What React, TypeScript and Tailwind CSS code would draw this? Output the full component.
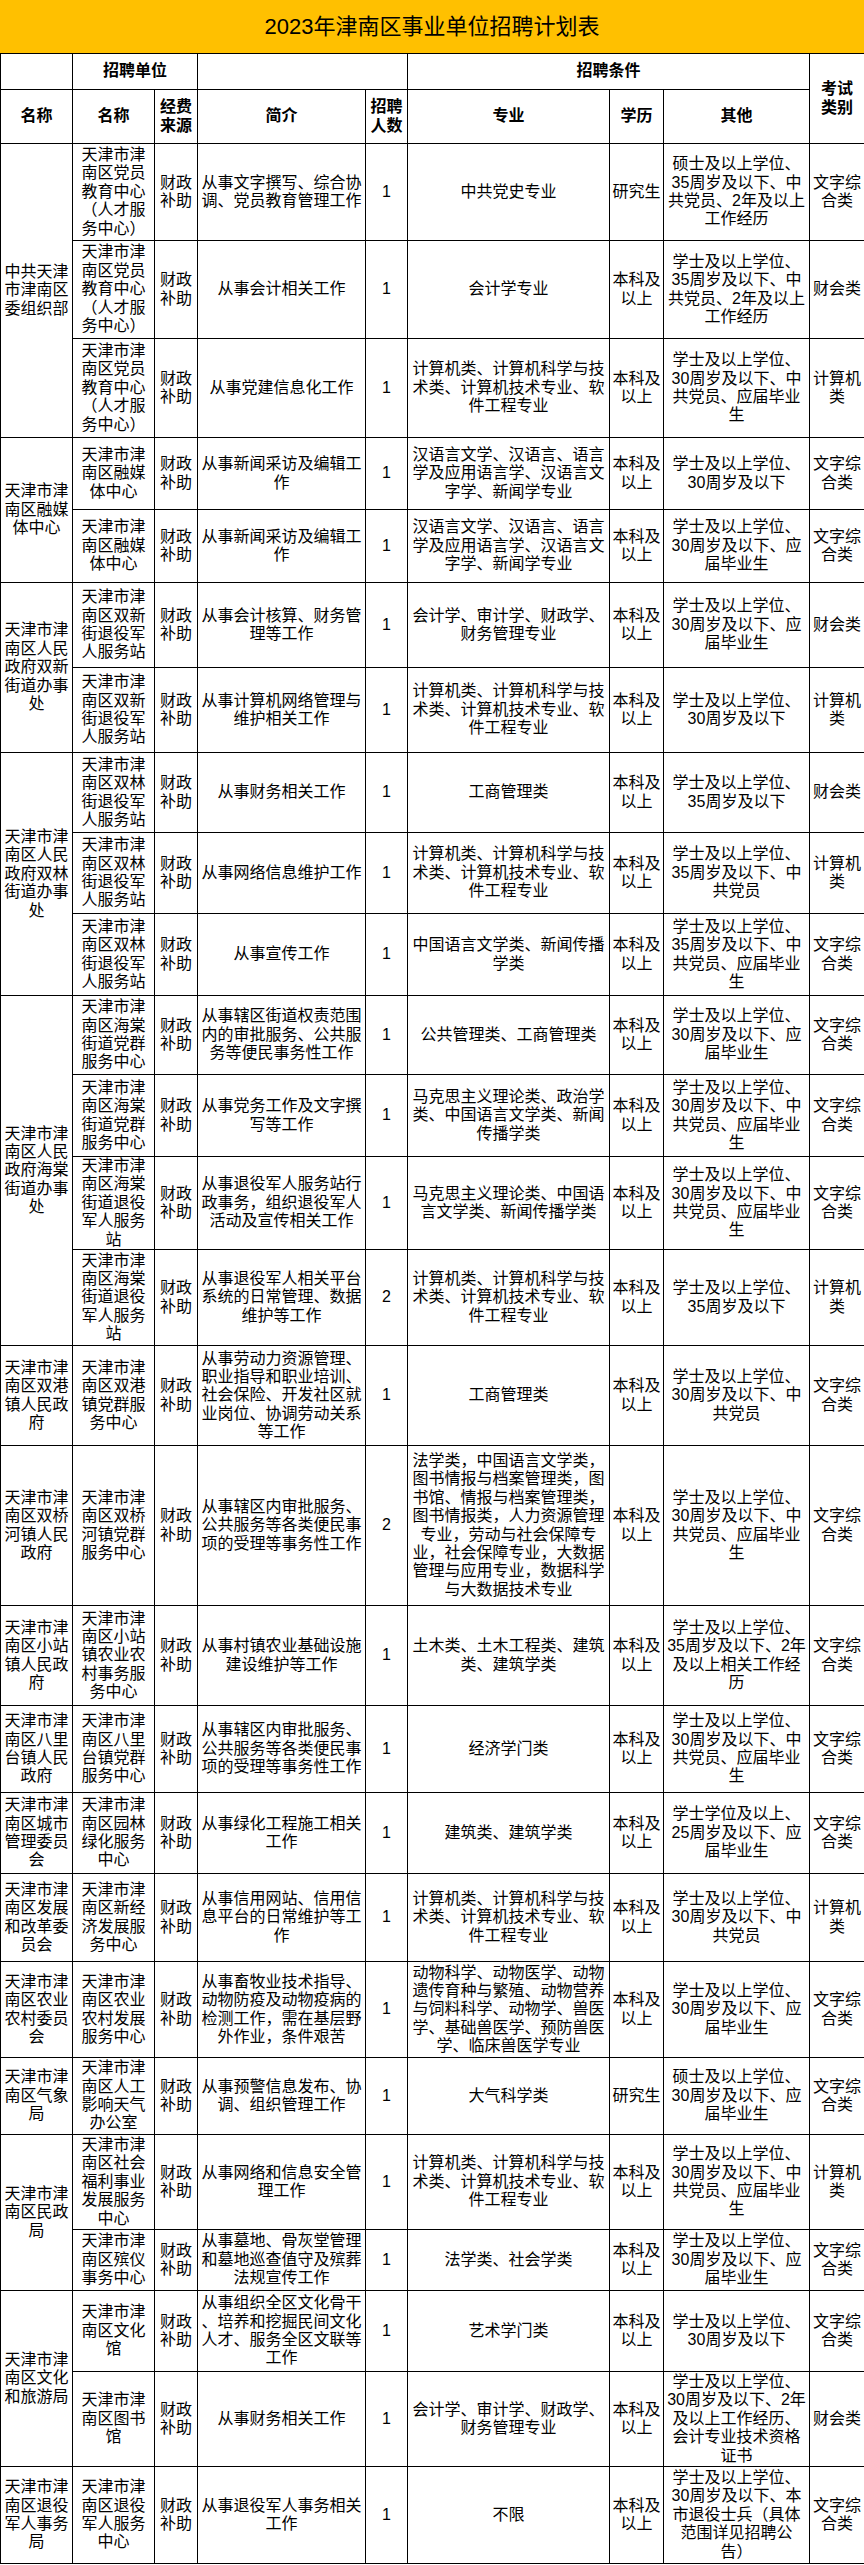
import React from 'react';

type Row = {
  h: string;
  org?: string;
  span?: number;
  unit: string;
  intro: string;
  num: string;
  major: string;
  edu: string;
  other: string;
  exam: string;
};

const DY = '天津市津\n南区党员\n教育中心\n（人才服\n务中心）';
const JSJ = '计算机类、计算机科学与技\n术类、计算机技术专业、软\n件工程专业';
const HYY = '汉语言文学、汉语言、语言\n学及应用语言学、汉语言文\n字学、新闻学专业';
const BK = '本科及\n以上';
const WZ = '文字综\n合类';
const JS = '计算机\n类';
const CK = '财会类';

const rows: Row[] = [
  { h: 'h-[97px]', org: '中共天津\n市津南区\n委组织部', span: 3, unit: DY, intro: '从事文字撰写、综合协\n调、党员教育管理工作', num: '1', major: '中共党史专业', edu: '研究生', other: '硕士及以上学位、\n35周岁及以下、中\n共党员、2年及以上\n工作经历', exam: WZ },
  { h: 'h-[98px]', unit: DY, intro: '从事会计相关工作', num: '1', major: '会计学专业', edu: BK, other: '学士及以上学位、\n35周岁及以下、中\n共党员、2年及以上\n工作经历', exam: CK },
  { h: 'h-[99px]', unit: DY, intro: '从事党建信息化工作', num: '1', major: JSJ, edu: BK, other: '学士及以上学位、\n30周岁及以下、中\n共党员、应届毕业\n生', exam: JS },
  { h: 'h-[72px]', org: '天津市津\n南区融媒\n体中心', span: 2, unit: '天津市津\n南区融媒\n体中心', intro: '从事新闻采访及编辑工\n作', num: '1', major: HYY, edu: BK, other: '学士及以上学位、\n30周岁及以下', exam: WZ },
  { h: 'h-[73px]', unit: '天津市津\n南区融媒\n体中心', intro: '从事新闻采访及编辑工\n作', num: '1', major: HYY, edu: BK, other: '学士及以上学位、\n30周岁及以下、应\n届毕业生', exam: WZ },
  { h: 'h-[85px]', org: '天津市津\n南区人民\n政府双新\n街道办事\n处', span: 2, unit: '天津市津\n南区双新\n街退役军\n人服务站', intro: '从事会计核算、财务管\n理等工作', num: '1', major: '会计学、审计学、财政学、\n财务管理专业', edu: BK, other: '学士及以上学位、\n30周岁及以下、应\n届毕业生', exam: CK },
  { h: 'h-[85px]', unit: '天津市津\n南区双新\n街退役军\n人服务站', intro: '从事计算机网络管理与\n维护相关工作', num: '1', major: JSJ, edu: BK, other: '学士及以上学位、\n30周岁及以下', exam: JS },
  { h: 'h-[80px]', org: '天津市津\n南区人民\n政府双林\n街道办事\n处', span: 3, unit: '天津市津\n南区双林\n街退役军\n人服务站', intro: '从事财务相关工作', num: '1', major: '工商管理类', edu: BK, other: '学士及以上学位、\n35周岁及以下', exam: CK },
  { h: 'h-[81px]', unit: '天津市津\n南区双林\n街退役军\n人服务站', intro: '从事网络信息维护工作', num: '1', major: JSJ, edu: BK, other: '学士及以上学位、\n35周岁及以下、中\n共党员', exam: JS },
  { h: 'h-[82px]', unit: '天津市津\n南区双林\n街退役军\n人服务站', intro: '从事宣传工作', num: '1', major: '中国语言文学类、新闻传播\n学类', edu: BK, other: '学士及以上学位、\n35周岁及以下、中\n共党员、应届毕业\n生', exam: WZ },
  { h: 'h-[79px]', org: '天津市津\n南区人民\n政府海棠\n街道办事\n处', span: 4, unit: '天津市津\n南区海棠\n街道党群\n服务中心', intro: '从事辖区街道权责范围\n内的审批服务、公共服\n务等便民事务性工作', num: '1', major: '公共管理类、工商管理类', edu: BK, other: '学士及以上学位、\n30周岁及以下、应\n届毕业生', exam: WZ },
  { h: 'h-[82px]', unit: '天津市津\n南区海棠\n街道党群\n服务中心', intro: '从事党务工作及文字撰\n写等工作', num: '1', major: '马克思主义理论类、政治学\n类、中国语言文学类、新闻\n传播学类', edu: BK, other: '学士及以上学位、\n30周岁及以下、中\n共党员、应届毕业\n生', exam: WZ },
  { h: 'h-[93px]', unit: '天津市津\n南区海棠\n街道退役\n军人服务\n站', intro: '从事退役军人服务站行\n政事务，组织退役军人\n活动及宣传相关工作', num: '1', major: '马克思主义理论类、中国语\n言文学类、新闻传播学类', edu: BK, other: '学士及以上学位、\n30周岁及以下、中\n共党员、应届毕业\n生', exam: WZ },
  { h: 'h-[96px]', unit: '天津市津\n南区海棠\n街道退役\n军人服务\n站', intro: '从事退役军人相关平台\n系统的日常管理、数据\n维护等工作', num: '2', major: JSJ, edu: BK, other: '学士及以上学位、\n35周岁及以下', exam: JS },
  { h: 'h-[100px]', org: '天津市津\n南区双港\n镇人民政\n府', span: 1, unit: '天津市津\n南区双港\n镇党群服\n务中心', intro: '从事劳动力资源管理、\n职业指导和职业培训、\n社会保险、开发社区就\n业岗位、协调劳动关系\n等工作', num: '1', major: '工商管理类', edu: BK, other: '学士及以上学位、\n30周岁及以下、中\n共党员', exam: WZ },
  { h: 'h-[160px]', org: '天津市津\n南区双桥\n河镇人民\n政府', span: 1, unit: '天津市津\n南区双桥\n河镇党群\n服务中心', intro: '从事辖区内审批服务、\n公共服务等各类便民事\n项的受理等事务性工作', num: '2', major: '法学类，中国语言文学类，\n图书情报与档案管理类，图\n书馆、情报与档案管理类，\n图书情报类，人力资源管理\n专业，劳动与社会保障专\n业，社会保障专业，大数据\n管理与应用专业，数据科学\n与大数据技术专业', edu: BK, other: '学士及以上学位、\n30周岁及以下、中\n共党员、应届毕业\n生', exam: WZ },
  { h: 'h-[100px]', org: '天津市津\n南区小站\n镇人民政\n府', span: 1, unit: '天津市津\n南区小站\n镇农业农\n村事务服\n务中心', intro: '从事村镇农业基础设施\n建设维护等工作', num: '1', major: '土木类、土木工程类、建筑\n类、建筑学类', edu: BK, other: '学士及以上学位、\n35周岁及以下、2年\n及以上相关工作经\n历', exam: WZ },
  { h: 'h-[87px]', org: '天津市津\n南区八里\n台镇人民\n政府', span: 1, unit: '天津市津\n南区八里\n台镇党群\n服务中心', intro: '从事辖区内审批服务、\n公共服务等各类便民事\n项的受理等事务性工作', num: '1', major: '经济学门类', edu: BK, other: '学士及以上学位、\n30周岁及以下、中\n共党员、应届毕业\n生', exam: WZ },
  { h: 'h-[81px]', org: '天津市津\n南区城市\n管理委员\n会', span: 1, unit: '天津市津\n南区园林\n绿化服务\n中心', intro: '从事绿化工程施工相关\n工作', num: '1', major: '建筑类、建筑学类', edu: BK, other: '学士学位及以上、\n25周岁及以下、应\n届毕业生', exam: WZ },
  { h: 'h-[88px]', org: '天津市津\n南区发展\n和改革委\n员会', span: 1, unit: '天津市津\n南区新经\n济发展服\n务中心', intro: '从事信用网站、信用信\n息平台的日常维护等工\n作', num: '1', major: JSJ, edu: BK, other: '学士及以上学位、\n30周岁及以下、中\n共党员', exam: JS },
  { h: 'h-[96px]', org: '天津市津\n南区农业\n农村委员\n会', span: 1, unit: '天津市津\n南区农业\n农村发展\n服务中心', intro: '从事畜牧业技术指导、\n动物防疫及动物疫病的\n检测工作，需在基层野\n外作业，条件艰苦', num: '1', major: '动物科学、动物医学、动物\n遗传育种与繁殖、动物营养\n与饲料科学、动物学、兽医\n学、基础兽医学、预防兽医\n学、临床兽医学专业', edu: BK, other: '学士及以上学位、\n30周岁及以下、应\n届毕业生', exam: WZ },
  { h: 'h-[77px]', org: '天津市津\n南区气象\n局', span: 1, unit: '天津市津\n南区人工\n影响天气\n办公室', intro: '从事预警信息发布、协\n调、组织管理工作', num: '1', major: '大气科学类', edu: '研究生', other: '硕士及以上学位、\n30周岁及以下、应\n届毕业生', exam: WZ },
  { h: 'h-[95px]', org: '天津市津\n南区民政\n局', span: 2, unit: '天津市津\n南区社会\n福利事业\n发展服务\n中心', intro: '从事网络和信息安全管\n理工作', num: '1', major: JSJ, edu: BK, other: '学士及以上学位、\n30周岁及以下、中\n共党员、应届毕业\n生', exam: JS },
  { h: 'h-[61px]', unit: '天津市津\n南区殡仪\n事务中心', intro: '从事墓地、骨灰堂管理\n和墓地巡查值守及殡葬\n法规宣传工作', num: '1', major: '法学类、社会学类', edu: BK, other: '学士及以上学位、\n30周岁及以下、应\n届毕业生', exam: WZ },
  { h: 'h-[81px]', org: '天津市津\n南区文化\n和旅游局', span: 2, unit: '天津市津\n南区文化\n馆', intro: '从事组织全区文化骨干\n、培养和挖掘民间文化\n人才、服务全区文联等\n工作', num: '1', major: '艺术学门类', edu: BK, other: '学士及以上学位、\n30周岁及以下', exam: WZ },
  { h: 'h-[95px]', unit: '天津市津\n南区图书\n馆', intro: '从事财务相关工作', num: '1', major: '会计学、审计学、财政学、\n财务管理专业', edu: BK, other: '学士及以上学位、\n30周岁及以下、2年\n及以上工作经历、\n会计专业技术资格\n证书', exam: CK },
  { h: 'h-[97px]', org: '天津市津\n南区退役\n军人事务\n局', span: 1, unit: '天津市津\n南区退役\n军人服务\n中心', intro: '从事退役军人事务相关\n工作', num: '1', major: '不限', edu: BK, other: '学士及以上学位、\n30周岁及以下、本\n市退役士兵（具体\n范围详见招聘公\n告）', exam: WZ },
];

const cell = 'border border-black p-0 text-center align-middle whitespace-pre';
const head = 'border border-black p-0 text-center align-middle whitespace-pre font-bold';

export default function App() {
  return (
    <div className="w-[864px] bg-white text-black leading-[18.4px] font-['Liberation_Sans','Noto_Sans_CJK_SC',sans-serif]">
      <div className="h-[53px] bg-[#FFC000] flex items-center justify-center">
        <span className="text-[22px] [font-size:22px] leading-none font-normal text-black">2023年津南区事业单位招聘计划表</span>
      </div>
      <table className="w-[864px] table-fixed border-collapse">
        <colgroup>
          <col className="w-[72px]" />
          <col className="w-[82px]" />
          <col className="w-[43px]" />
          <col className="w-[168px]" />
          <col className="w-[42px]" />
          <col className="w-[202px]" />
          <col className="w-[54px]" />
          <col className="w-[146px]" />
          <col className="w-[55px]" />
        </colgroup>
        <thead>
          <tr className="h-[36px]">
            <th className={head}></th>
            <th className={head} colSpan={2}>招聘单位</th>
            <th className={head} colSpan={2}></th>
            <th className={head} colSpan={3}>招聘条件</th>
            <th className={head} rowSpan={2}>{'考试\n类别'}</th>
          </tr>
          <tr className="h-[54px]">
            <th className={head}>名称</th>
            <th className={head}>名称</th>
            <th className={head}>{'经费\n来源'}</th>
            <th className={head}>简介</th>
            <th className={head}>{'招聘\n人数'}</th>
            <th className={head}>专业</th>
            <th className={head}>学历</th>
            <th className={head}>其他</th>
          </tr>
        </thead>
        <tbody>
          {rows.map((r, i) => (
            <tr key={i} className={r.h}>
              {r.org && (
                <td className={cell} rowSpan={r.span}>{r.org}</td>
              )}
              <td className={cell}>{r.unit}</td>
              <td className={cell}>{'财政\n补助'}</td>
              <td className={cell}>{r.intro}</td>
              <td className={cell}>{r.num}</td>
              <td className={cell}>{r.major}</td>
              <td className={cell}>{r.edu}</td>
              <td className={cell}>{r.other}</td>
              <td className={cell}>{r.exam}</td>
            </tr>
          ))}
        </tbody>
      </table>
    </div>
  );
}
